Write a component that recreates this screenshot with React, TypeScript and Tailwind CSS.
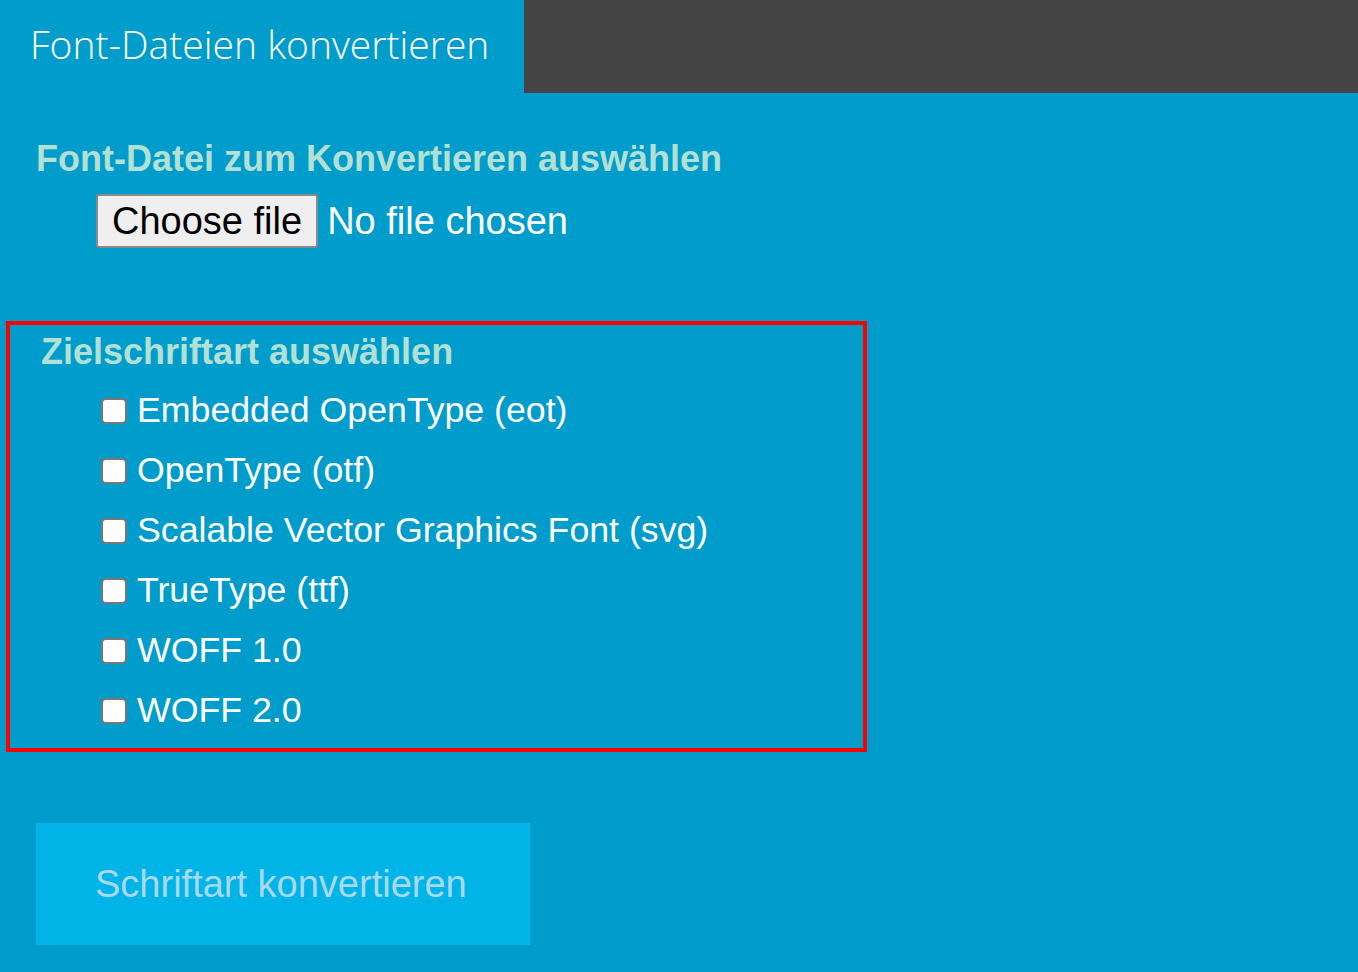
export default function App() {
  const formats = [
    "Embedded OpenType (eot)",
    "OpenType (otf)",
    "Scalable Vector Graphics Font (svg)",
    "TrueType (ttf)",
    "WOFF 1.0",
    "WOFF 2.0",
  ];

  return (
    <div
      className="min-h-[972px] w-full bg-[#009ccb]"
      style={{ fontFamily: '"Liberation Sans", Arial, sans-serif' }}
    >
      <div className="flex h-[93px]">
        <div className="flex w-[524px] items-center pb-[6px] pl-[30px]">
          <h1
            className="text-[39px] font-light leading-none text-white"
            style={{ fontFamily: '"Open Sans", sans-serif' }}
          >
            Font-Dateien konvertieren
          </h1>
        </div>
        <div className="flex-1 bg-[#444444]" />
      </div>

      <div className="pl-[36px] pt-[44px]">
        <h2 className="text-[36px] font-bold leading-[44px] text-[#b3e0d4]">
          Font-Datei zum Konvertieren auswählen
        </h2>
        <div className="mt-[13px] flex items-center pl-[60px]">
          <button
            type="button"
            className="h-[54px] rounded-[3px] border-2 border-[#8a8a8a] bg-[#efefef] px-[14px] text-[38px] leading-none text-black"
          >
            Choose file
          </button>
          <span className="ml-[9px] text-[38px] leading-none text-white">No file chosen</span>
        </div>
      </div>

      <div className="ml-[6px] mt-[73px] w-[861px] border-4 border-[#ff0000] pb-[7px] pl-[31px] pt-[5px]">
        <h2 className="text-[36px] font-bold leading-[44px] text-[#b3e0d4]">
          Zielschriftart auswählen
        </h2>
        <ul className="mt-[7px] pl-[60px]">
          {formats.map((f) => (
            <li key={f} className="flex h-[60px] items-center">
              <span className="mr-[10px] h-[26px] w-[26px] rounded-[5px] border-2 border-[#777777] bg-white" />
              <span className="text-[35.7px] leading-none text-white">{f}</span>
            </li>
          ))}
        </ul>
      </div>

      <div className="pl-[36px] pt-[71px]">
        <button
          type="button"
          className="h-[122px] w-[494px] bg-[#00b4e8] pl-[59px] text-left text-[38px] text-[#a8d9ee]"
        >
          Schriftart konvertieren
        </button>
      </div>
    </div>
  );
}
